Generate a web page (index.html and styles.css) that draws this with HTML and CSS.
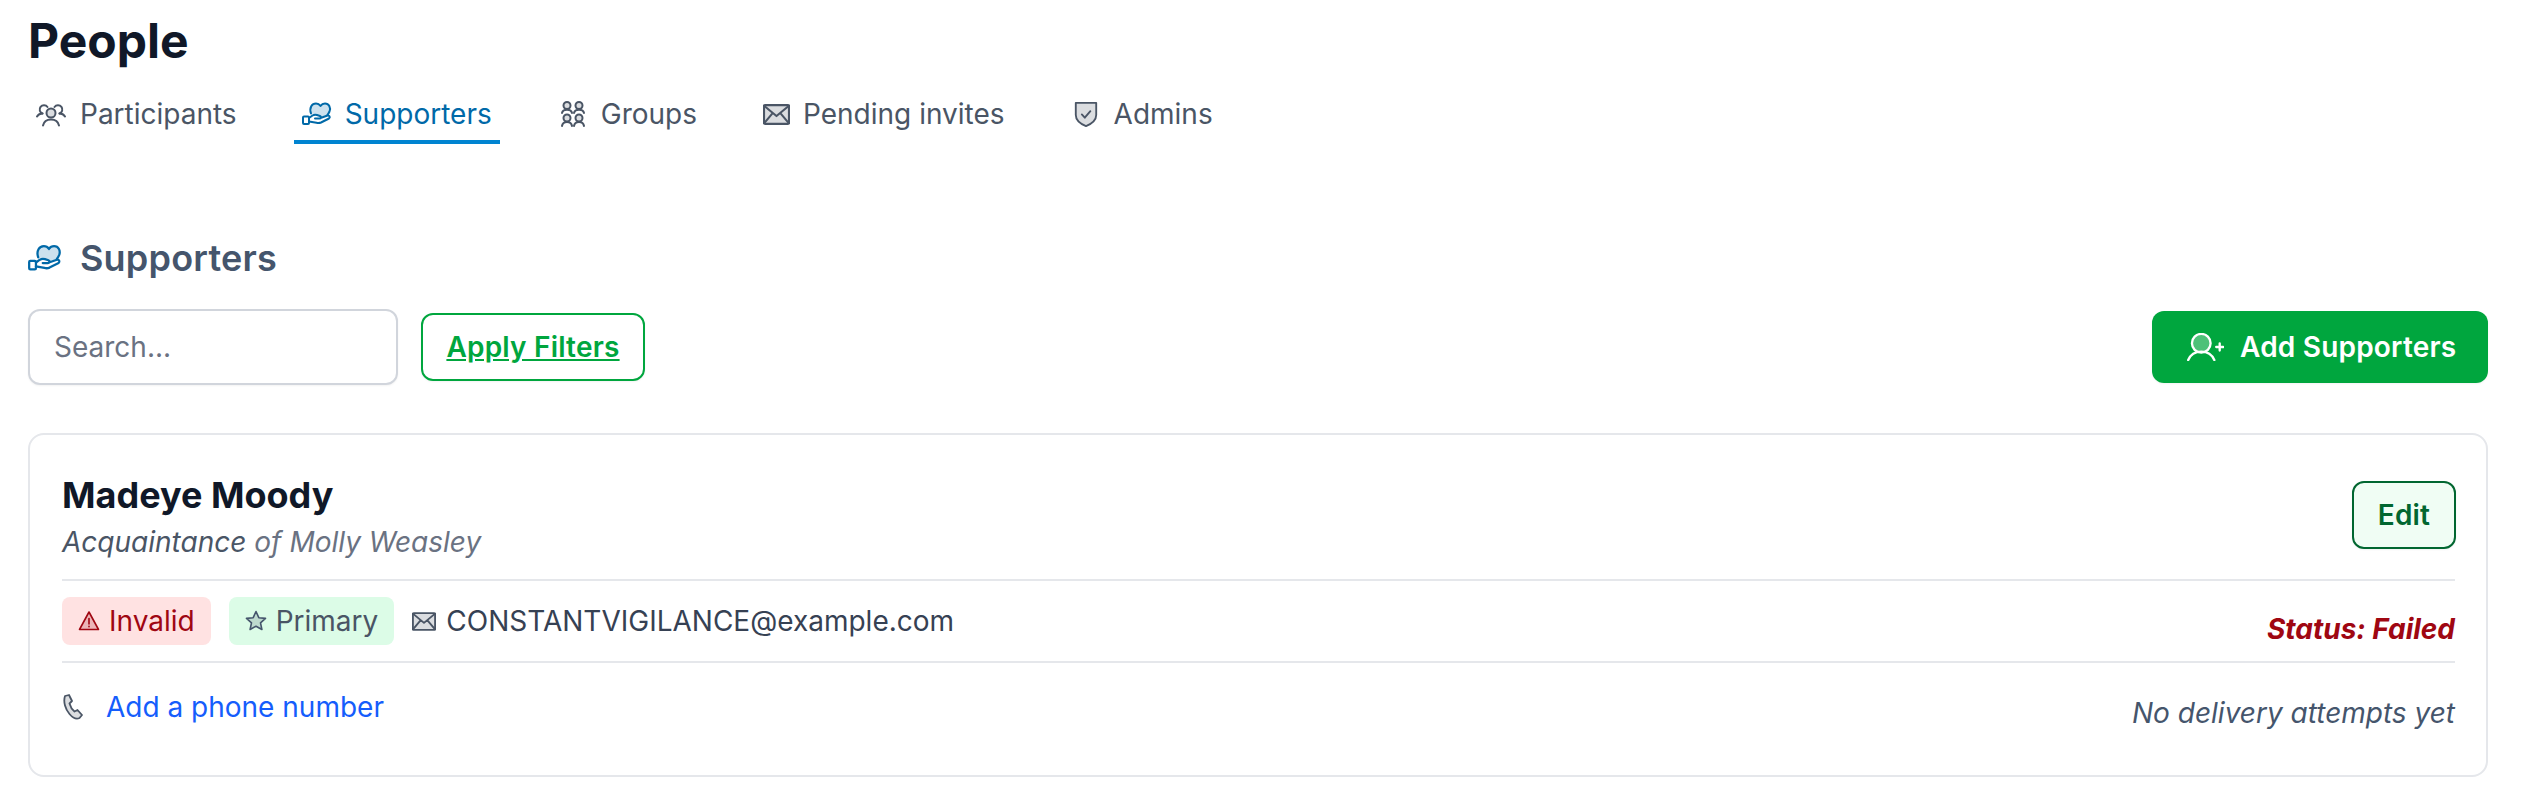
FILE: index.html
```html
<!DOCTYPE html>
<html lang="en">
<head>
    <meta charset="UTF-8">
    <meta name="viewport" content="width=device-width, initial-scale=1.0">
    <title>People</title>
    <link rel="stylesheet" href="styles.css">
</head>
<body>
    <svg class="icon-defs" width="0" height="0" aria-hidden="true">
        <symbol id="i-hand-heart" viewBox="0 0 30 23">
            <path class="fill" d="M9 11C7 5 10 1 14 1c2 0 3.500 1 4.500 2.500C19.500 2 21 1 23 1c4 0 6 4 4.500 8-.5 1.200-1.200 2.300-2 3.300L18 14.500 15 12z"/>
            <path d="M9 11C7 5 10 1 14 1c2 0 3.500 1 4.500 2.500C19.500 2 21 1 23 1c4 0 6 4 4.500 8-.5 1.200-1.200 2.300-2 3.300"/>
            <path d="M7 15.500l3.500-2.500c1.500-1 3-1 4.500-.5l3 1c1.500.5 1 2.500-.5 2.500H13M18.500 15.500l7-2.500c2-.5 3 2 1.500 3l-8 4c-1.500.7-3 .7-4.500.3L7 19"/>
            <rect x="1" y="14" width="6" height="7.500" rx="1"/>
        </symbol>
        <symbol id="i-mail" viewBox="0 0 26 20">
            <rect class="fill" x="1" y="1" width="24" height="18"/>
            <rect x="1" y="1" width="24" height="18" rx="1"/>
            <path d="M1 1.500l12 10 12-10M1 18.500l8.500-10M25 18.500l-8.500-10"/>
        </symbol>
    </svg>

    <div class="page">
        <h1 class="page-title">People</h1>

        <nav class="tabs">
            <a class="tab tab-first" href="#">
                <svg class="tab-icon" viewBox="0 0 30 26">
                    <circle class="fill" cx="15" cy="12" r="4.500"/>
                    <circle cx="15" cy="12" r="4.500"/>
                    <path d="M7 24.500c.8-3.700 4-6 8-6s7.200 2.300 8 6"/>
                    <path d="M6.500 12.500A4.300 4.300 0 1 1 11.500 6M18.500 6a4.300 4.300 0 1 1 5 6.500"/>
                    <path d="M1 15.500c1.200-2 3-3 5.500-3M29 15.500c-1.200-2-3-3-5.500-3"/>
                </svg>
                <span>Participants</span>
            </a>
            <a class="tab tab-active" href="#">
                <svg class="tab-icon"><use href="#i-hand-heart"/></svg>
                <span>Supporters</span>
            </a>
            <a class="tab" href="#">
                <svg class="tab-icon" viewBox="0 0 30 26">
                    <g class="fill">
                        <circle cx="9" cy="4.500" r="3.500"/>
                        <circle cx="21" cy="4.500" r="3.500"/>
                        <circle cx="9" cy="17" r="3.500"/>
                        <circle cx="21" cy="17" r="3.500"/>
                    </g>
                    <circle cx="9" cy="4.500" r="3.500"/>
                    <circle cx="21" cy="4.500" r="3.500"/>
                    <circle cx="9" cy="17" r="3.500"/>
                    <circle cx="21" cy="17" r="3.500"/>
                    <path d="M4 12c.4-2 2.400-3.300 5-3.300s4.600 1.300 5 3.300M16 12c.4-2 2.400-3.300 5-3.300s4.600 1.300 5 3.300M4 25c.4-2.500 2.400-4 5-4s4.600 1.500 5 4M16 25c.4-2.500 2.400-4 5-4s4.600 1.500 5 4"/>
                </svg>
                <span>Groups</span>
            </a>
            <a class="tab" href="#">
                <svg class="tab-icon tab-icon-mail"><use href="#i-mail"/></svg>
                <span>Pending invites</span>
            </a>
            <a class="tab" href="#">
                <svg class="tab-icon" viewBox="0 0 26 28">
                    <path class="fill" d="M2 2h22v13c0 5.500-5 9.500-11 12C7 24.500 2 20.500 2 15z"/>
                    <path d="M2 2h22v13c0 5.500-5 9.500-11 12C7 24.500 2 20.500 2 15z"/>
                    <path d="M8.500 14.500l3.200 3.500 6-7"/>
                </svg>
                <span>Admins</span>
            </a>
        </nav>

        <h2 class="section-title">
            <svg class="section-icon"><use href="#i-hand-heart"/></svg>
            <span>Supporters</span>
        </h2>

        <div class="toolbar">
            <input class="search" type="text" placeholder="Search...">
            <button class="btn btn-filter">Apply Filters</button>
            <button class="btn btn-add">
                <svg class="add-icon" viewBox="0 0 40 30">
                    <circle class="fill" cx="16" cy="11" r="10"/>
                    <circle cx="16" cy="11" r="10"/>
                    <path d="M2 29c2.500-6 7.500-9 14-9s11.500 3 14 9"/>
                    <path d="M32 15h7.500M35.750 11.250v7.500"/>
                </svg>
                <span>Add Supporters</span>
            </button>
        </div>

        <section class="card">
            <div class="card-head">
                <div>
                    <h3 class="person-name">Madeye Moody</h3>
                    <p class="person-rel"><span class="rel-type">Acquaintance</span> of Molly Weasley</p>
                </div>
                <button class="btn btn-edit">Edit</button>
            </div>

            <div class="card-row row-email">
                <div class="row-left">
                    <span class="badge badge-invalid">
                        <svg class="badge-icon" viewBox="0 0 22 22">
                            <path class="fill" d="M11 2l9.500 17.500h-19z"/>
                            <path d="M11 2l9.500 17.500h-19zM11 8.500v5.500M11 16.300v.5"/>
                        </svg>
                        Invalid
                    </span>
                    <span class="badge badge-primary">
                        <svg class="badge-icon" viewBox="0 0 22 22">
                            <path class="fill" d="M11 1.500l2.800 6.200 6.700.7-5 4.500 1.400 6.600L11 16.200l-5.900 3.300 1.400-6.600-5-4.500 6.700-.7z"/>
                            <path d="M11 1.500l2.800 6.200 6.700.7-5 4.500 1.400 6.600L11 16.200l-5.900 3.300 1.400-6.600-5-4.500 6.700-.7z"/>
                        </svg>
                        Primary
                    </span>
                    <svg class="mail-icon"><use href="#i-mail"/></svg>
                    <span class="email">CONSTANTVIGILANCE@example.com</span>
                </div>
                <span class="status-failed">Status: Failed</span>
            </div>

            <div class="card-row row-phone">
                <div class="row-left">
                    <svg class="phone-icon" viewBox="0 0 22 26">
                        <path class="fill" d="M3 2l4-1 3 6-2.500 2.500c.8 3 2.500 6 5 8l3-1.500 4.500 5-2.500 3c-3 1.500-7-.5-10-4C3.500 15.500 1 8 3 2z"/>
                        <path d="M3 2l4-1 3 6-2.500 2.500c.8 3 2.500 6 5 8l3-1.500 4.500 5-2.500 3c-3 1.500-7-.5-10-4C3.500 15.500 1 8 3 2z"/>
                    </svg>
                    <a class="phone-link" href="#">Add a phone number</a>
                </div>
                <span class="no-attempts">No delivery attempts yet</span>
            </div>
        </section>
    </div>
</body>
</html>
```

FILE: styles.css
```css
* { margin: 0; padding: 0; box-sizing: border-box; }
body {
    font-family: 'Inter', 'Liberation Sans', sans-serif;
    background-color: #fff;
    color: #101828;
}
.icon-defs { position: absolute; }
svg { fill: none; stroke: currentColor; stroke-linecap: round; stroke-linejoin: round; flex: none; }
svg .fill, symbol .fill { fill: currentColor; fill-opacity: 0.2; stroke: none; }

.page { padding: 16px 38px 0 28px; }
.page-title { font-size: 48px; line-height: 50px; font-weight: 700; color: #101828; }

.tabs { display: flex; gap: 8px; margin-top: 30px; }
.tab {
    display: flex; align-items: center; gap: 13px;
    height: 48px; padding: 0 8px 8px; margin-right: 42px;
    font-size: 28px; color: #4a5565; text-decoration: none;
    border-bottom: 4px solid transparent;
}
.tab-first { gap: 14px; margin-right: 41px; }
.tab-icon { width: 30px; height: 26px; stroke-width: 2; }
.tab-icon-mail { width: 27px; height: 21px; }
.tab-active { color: #0069a8; border-bottom-color: #0084d1; }

.section-title {
    display: flex; align-items: center; gap: 18px;
    margin-top: 94px; font-size: 36px; line-height: 40px; font-weight: 600; letter-spacing: 0.2px; color: #45556c;
}
.section-icon { width: 34px; height: 26px; stroke-width: 2; color: #0069a8; }

.toolbar { display: flex; align-items: center; margin-top: 31px; }
.search {
    width: 370px; height: 76px; padding: 0 24px;
    font: 400 28px 'Inter', sans-serif;
    border: 2px solid #d1d5dc; border-radius: 12px;
    box-shadow: 0 1px 2px rgba(0, 0, 0, 0.05);
}
.search::placeholder { color: #6a7282; }
.btn { font-family: inherit; letter-spacing: 0.2px; cursor: pointer; box-shadow: 0 1px 2px rgba(0, 0, 0, 0.05); }
.btn-filter {
    width: 224px; height: 68px; margin-left: 23px;
    font-size: 28px; font-weight: 600; color: #00a63e; text-decoration: underline;
    background: #fff; border: 2px solid #00a63e; border-radius: 12px;
}
.btn-add {
    display: flex; align-items: center; gap: 16px;
    width: 336px; height: 72px; padding-left: 34px; margin-left: auto;
    font-size: 28px; font-weight: 600; color: #fff;
    background-color: #00a63e; border: none; border-radius: 12px;
}
.add-icon { width: 38px; height: 28px; stroke-width: 2.500; }
.add-icon .fill { fill-opacity: 0.3; }

.card {
    margin-top: 48px; padding: 0 31px 0 32px; height: 344px;
    border: 2px solid #e5e7eb; border-radius: 16px;
}
.card-head { display: flex; justify-content: space-between; align-items: flex-start; padding-top: 38px; height: 144px; }
.person-name { font-size: 36px; line-height: 44px; font-weight: 700; color: #101828; }
.person-rel { font-size: 28px; line-height: 50px; font-style: italic; color: #6a7282; }
.rel-type { color: #4a5565; }
.btn-edit {
    width: 104px; height: 68px; margin-top: 8px; margin-right: -1px; font-size: 28px; font-weight: 600;
    color: #016630; background-color: #f0fdf4; border: 2px solid #016630; border-radius: 12px;
}

.card-row { display: flex; justify-content: space-between; border-top: 2px solid #e5e7eb; }
.row-left { display: flex; align-items: center; }
.row-email { height: 82px; padding-top: 16px; }
.row-email .row-left { align-self: flex-start; }
.row-phone { padding-top: 20px; }
.badge {
    display: flex; align-items: center; gap: 9px;
    height: 48px; padding: 0 16px; margin-right: 18px;
    font-size: 28px; border-radius: 8px;
}
.badge-icon { width: 22px; height: 22px; stroke-width: 1.600; }
.badge-invalid { background-color: #ffe2e2; color: #9f0712; }
.badge-primary { background-color: #dcfce7; color: #4a5565; }
.badge-primary .badge-icon { color: #45556c; }
.mail-icon { width: 24px; height: 19px; stroke-width: 2; color: #4a5565; margin-right: 10px; }
.email { font-size: 28px; color: #364153; }
.status-failed { align-self: flex-end; padding-bottom: 15px; font-size: 28px; font-weight: 700; font-style: italic; color: #9f0712; }
.phone-icon { width: 22px; height: 26px; stroke-width: 1.800; color: #4a5565; margin-right: 22px; }
.phone-link { font-size: 28px; color: #155dfc; text-decoration: none; }
.no-attempts { padding-top: 13px; font-size: 28px; font-style: italic; color: #45556c; }
```
